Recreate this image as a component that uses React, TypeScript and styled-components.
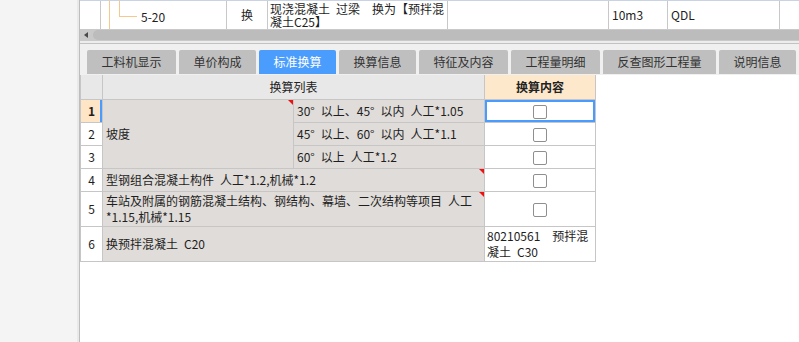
import React from "react";
import styled, { createGlobalStyle, css } from "styled-components";

const GlobalStyle = createGlobalStyle`
  html, body { margin: 0; padding: 0; }
  body {
    font-family: "Noto Sans CJK SC", "Liberation Sans", sans-serif;
    font-size: 12px;
    color: #1e1e1e;
    background: #fff;
  }
  * { box-sizing: border-box; }
`;

const Page = styled.div`
  display: flex;
  width: 799px;
  height: 342px;
  overflow: hidden;
`;

const SidePanel = styled.div`
  flex: none;
  width: 79px;
  background: #f4f4f4;
  border-right: 2px solid #e9e9e9;
`;

const Main = styled.div`
  flex: 1;
  min-width: 0;
  display: flex;
  flex-direction: column;
  border-left: 1px solid #bdbdbd;
  background: #fff;
`;

/* ---------- top list row ---------- */
const TopRow = styled.div`
  display: flex;
  height: 29px;
  border-top: 1px solid #c9d3e3;
  background: #fff;
`;

const TopCell = styled.div<{ $w?: number; $center?: boolean }>`
  flex: ${(p) => (p.$w ? "none" : "1")};
  width: ${(p) => (p.$w ? `${p.$w}px` : "auto")};
  border-right: ${(p) => (p.$w ? "1px solid #c8c8c8" : "none")};
  display: flex;
  align-items: center;
  justify-content: ${(p) => (p.$center ? "center" : "flex-start")};
  padding-left: ${(p) => (p.$center ? 0 : 3)}px;
  line-height: 14px;
  white-space: pre;
  overflow: hidden;
`;

const TreeCell = styled.div`
  flex: none;
  width: 126px;
  border-right: 1px solid #c8c8c8;
  display: flex;
  align-items: stretch;
  padding-left: 8px;
`;

const TreeGuide = styled.span`
  flex: none;
  width: 10px;
  border-left: 1px solid #f6c88c;
`;

const TreeElbow = styled.span`
  flex: none;
  width: 18px;
  height: 16px;
  border-left: 1px solid #f6c88c;
  border-bottom: 1px solid #f6c88c;
`;

const TreeCode = styled.span`
  align-self: center;
  margin-left: 4px;
  margin-top: 2px;
`;

const NameCell = styled.div`
  flex: none;
  width: 180px;
  border-right: 1px solid #c8c8c8;
  padding: 1px 0 0 2px;
  line-height: 13px;
  white-space: pre;
  overflow: hidden;
`;

/* ---------- scrollbar ---------- */
const HScroll = styled.div`
  height: 12px;
  background: #c9c9c9;
  display: flex;
  align-items: center;
  padding-left: 4px;
`;

const ScrollArrow = styled.span`
  width: 0;
  height: 0;
  border-top: 3px solid transparent;
  border-bottom: 3px solid transparent;
  border-right: 4px solid #4a4a4a;
  margin-right: 5px;
`;

const ScrollThumb = styled.span`
  flex: 1;
  height: 10px;
  background: #bcbcbc;
  border-radius: 5px 0 0 5px;
`;

const Divider = styled.div`
  height: 3px;
  background: #ededed;
  border-bottom: 1px solid #c2c2c2;
`;

/* ---------- tabs ---------- */
const TabBar = styled.div`
  height: 31px;
  display: flex;
  align-items: flex-end;
  gap: 3px;
  padding: 0 0 1px 7px;
  background: #f0f0f0;
`;

const Tab = styled.div<{ $active?: boolean }>`
  flex: none;
  height: 24px;
  line-height: 24px;
  padding: 0 14.5px;
  border-radius: 2px 2px 0 0;
  background: #bfbfbf;
  color: #333;
  white-space: nowrap;
  ${(p) =>
    p.$active &&
    css`
      background: #4b9dfd;
      color: #fff;
    `}
`;

/* ---------- grid ---------- */
const Grid = styled.table`
  border-collapse: collapse;
  table-layout: fixed;
  width: 516px;
  margin-left: 0;
  font-size: 12px;
`;

const HeadCell = styled.th<{ $accent?: boolean }>`
  height: 24px;
  padding: 0;
  border: 1px solid #c6c6c6;
  border-top: none;
  background: ${(p) => (p.$accent ? "#fde8cb" : "#e8e8e8")};
  font-weight: ${(p) => (p.$accent ? 700 : 400)};
  color: #222;
  text-align: center;
`;

const RowNo = styled.td<{ $active?: boolean }>`
  padding: 0;
  border: 1px solid #c6c6c6;
  text-align: center;
  background: #fff;
  ${(p) =>
    p.$active &&
    css`
      background: #fde5c6;
      font-weight: 700;
      box-shadow: inset -2px 0 0 #4a9bff;
    `}
`;

const ItemCell = styled.td<{ $flag?: boolean }>`
  position: relative;
  padding: 0 3px;
  border: 1px solid #c6c6c6;
  background: #e0dcd9;
  line-height: 16px;
  white-space: pre-wrap;
  vertical-align: middle;
  ${(p) =>
    p.$flag &&
    css`
      &::after {
        content: "";
        position: absolute;
        top: 0;
        right: 0;
        border-top: 5px solid #f01010;
        border-left: 5px solid transparent;
      }
    `}
`;

const ContentCell = styled.td<{ $selected?: boolean; $text?: boolean }>`
  padding: ${(p) => (p.$text ? "0 2px" : 0)};
  border: 1px solid #c6c6c6;
  background: #fff;
  text-align: ${(p) => (p.$text ? "left" : "center")};
  line-height: 16px;
  white-space: pre-wrap;
  vertical-align: middle;
  ${(p) =>
    p.$selected &&
    css`
      box-shadow: inset 0 0 0 2px #4a9bff;
    `}
`;

const Check = styled.span`
  display: inline-block;
  width: 14px;
  height: 14px;
  border: 1px solid #8f8f8f;
  border-radius: 2px;
  background: #fff;
  vertical-align: middle;
`;

const Row = styled.tr<{ $h: number }>`
  height: ${(p) => p.$h}px;
`;

const tabs = [
  "工料机显示",
  "单价构成",
  "标准换算",
  "换算信息",
  "特征及内容",
  "工程量明细",
  "反查图形工程量",
  "说明信息",
];

export default function App() {
  return (
    <>
      <GlobalStyle />
      <Page>
        <SidePanel />
        <Main>
          <TopRow>
            <TopCell $w={21} />
            <TreeCell>
              <TreeGuide />
              <TreeElbow />
              <TreeCode>5-20</TreeCode>
            </TreeCell>
            <TopCell $w={41} $center>
              换
            </TopCell>
            <NameCell>
              {"现浇混凝土\u2002过梁\u2002\u2002换为【预拌混\n凝土C25】"}
            </NameCell>
            <TopCell $w={161} />
            <TopCell $w={59}>10m3</TopCell>
            <TopCell $w={112}>QDL</TopCell>
            <TopCell />
          </TopRow>
          <HScroll>
            <ScrollArrow />
            <ScrollThumb />
          </HScroll>
          <Divider />
          <TabBar>
            {tabs.map((t) => (
              <Tab key={t} $active={t === "标准换算"}>
                {t}
              </Tab>
            ))}
          </TabBar>
          <Grid>
            <colgroup>
              <col style={{ width: 22 }} />
              <col style={{ width: 191 }} />
              <col style={{ width: 191 }} />
              <col style={{ width: 111 }} />
            </colgroup>
            <thead>
              <tr>
                <HeadCell />
                <HeadCell colSpan={2}>换算列表</HeadCell>
                <HeadCell $accent>换算内容</HeadCell>
              </tr>
            </thead>
            <tbody>
              <Row $h={23}>
                <RowNo $active>1</RowNo>
                <ItemCell rowSpan={3} $flag>
                  坡度
                </ItemCell>
                <ItemCell>{"30°\u2002以上、45°\u2002以内\u2002人工*1.05"}</ItemCell>
                <ContentCell $selected>
                  <Check />
                </ContentCell>
              </Row>
              <Row $h={23}>
                <RowNo>2</RowNo>
                <ItemCell>{"45°\u2002以上、60°\u2002以内\u2002人工*1.1"}</ItemCell>
                <ContentCell>
                  <Check />
                </ContentCell>
              </Row>
              <Row $h={23}>
                <RowNo>3</RowNo>
                <ItemCell>{"60°\u2002以上\u2002人工*1.2"}</ItemCell>
                <ContentCell>
                  <Check />
                </ContentCell>
              </Row>
              <Row $h={23}>
                <RowNo>4</RowNo>
                <ItemCell colSpan={2} $flag>
                  {"型钢组合混凝土构件\u2002人工*1.2,机械*1.2"}
                </ItemCell>
                <ContentCell>
                  <Check />
                </ContentCell>
              </Row>
              <Row $h={35}>
                <RowNo>5</RowNo>
                <ItemCell colSpan={2} $flag>
                  {"车站及附属的钢筋混凝土结构、钢结构、幕墙、二次结构等项目\u2002人工\n*1.15,机械*1.15"}
                </ItemCell>
                <ContentCell>
                  <Check />
                </ContentCell>
              </Row>
              <Row $h={35}>
                <RowNo>6</RowNo>
                <ItemCell colSpan={2}>{"换预拌混凝土\u2002C20"}</ItemCell>
                <ContentCell $text>{"80210561\u3000预拌混\n凝土\u2002C30"}</ContentCell>
              </Row>
            </tbody>
          </Grid>
        </Main>
      </Page>
    </>
  );
}
